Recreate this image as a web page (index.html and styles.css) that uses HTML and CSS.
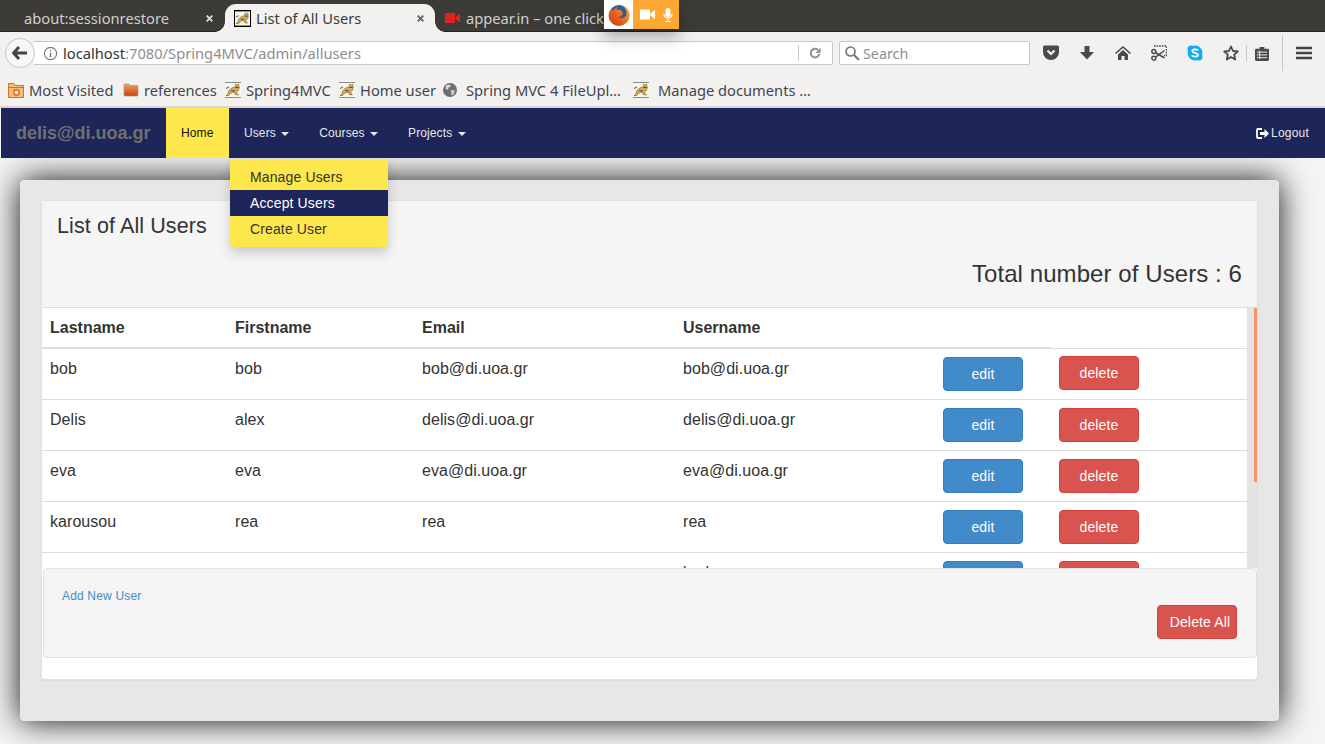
FILE: index.html
```html
<!DOCTYPE html>
<html lang="en">
<head>
<meta charset="utf-8">
<title>List of All Users</title>
<link rel="stylesheet" href="styles.css">
</head>
<body>
<svg class="defs" width="0" height="0" aria-hidden="true">
  <symbol id="tomcat" viewBox="0 0 16 16">
    <rect width="16" height="16" fill="#f6f5f0"/>
    <path d="M0 .5h16M0 15.500h16" stroke="#8a8a86"/>
    <path d="M1 13.500l2-1.500 .5-3 3-3 3.500-1 .8-3 1.400 1.200 1.300-1.200 .8 3.500-1 3-2 1.500 2 3-3-.5-1.500-2.500-3 1-2 2.500z" fill="#d9ae55" stroke="#6f5c2a" stroke-width=".6"/>
    <path d="M1 6.500l3-1.500M10.500 5.500l3 0M6 8.500l4 .5" stroke="#3a3a36" stroke-width=".9"/>
  </symbol>
</svg>

<header class="chrome">
  <div class="tabstrip">
    <div class="tab tab-first"><span class="tab-label">about:sessionrestore</span>
      <svg class="tab-x" width="7" height="7" viewBox="0 0 7 7"><path d="M.7.700l5.600 5.600M6.300.700L.7 6.300" stroke="#dcdbd7" stroke-width="1.900"/></svg>
    </div>
    <div class="tab tab-active">
      <svg class="fav-boxed" width="17" height="17"><use href="#tomcat"/></svg>
      <span class="tab-label">List of All Users</span>
      <svg class="tab-x" width="7" height="7" viewBox="0 0 7 7"><path d="M.7.700l5.600 5.600M6.300.700L.7 6.300" stroke="#666" stroke-width="1.900"/></svg>
    </div>
    <div class="tab tab-third">
      <svg width="15" height="10" viewBox="0 0 15 10"><path d="M0 1q0-1 1-1h8q1 0 1 1v8q0 1-1 1H1q-1 0-1-1zM10.500 4L15 .5v9L10.500 6z" fill="#e0241c"/></svg>
      <span class="tab-label">appear.in – one click</span>
    </div>
  </div>
  <div class="sharing">
    <div class="sharing-fx">
      <svg width="22" height="22" viewBox="0 0 22 22">
        <defs>
          <linearGradient id="fxo" x1="1" y1="0" x2="0" y2="1"><stop offset="0" stop-color="#fbc02a"/><stop offset=".45" stop-color="#ee6f1e"/><stop offset="1" stop-color="#c9341c"/></linearGradient>
        </defs>
        <circle cx="11" cy="11" r="10" fill="#2a5c9e"/>
        <path d="M13 1c5 1 8.500 5 8.500 10a10.500 10.500 0 0 1-21 1C.5 9 2.500 5.500 4 4c0 1.500.5 2.500 1 3.500C6 5 8 3.500 10.500 2.800c-1.500 1.200-2 2.200-1.500 3.200 2-1 5 .2 5.500 2.800.5 3-2 4.800-4.500 4.200 2 2 6.500 1.500 8-1.500 1.500-3.500-.5-8.200-5-10.500z" fill="url(#fxo)"/>
      </svg>
    </div>
    <div class="sharing-media">
      <svg width="15" height="11" viewBox="0 0 15 11"><path d="M0 1.500Q0 .5 1 .5h8q1 0 1 1v8q0 1-1 1H1q-1 0-1-1zM10.500 4.500L15 1v9l-4.500-3.500z" fill="#fff"/></svg>
      <svg width="10" height="14" viewBox="0 0 10 14"><rect x="2.500" y="0" width="5" height="9" rx="2.500" fill="#fff"/><path d="M1 6a4 4 0 0 0 8 0M5 10v3M2 13.500h6" fill="none" stroke="#fff" stroke-width="1.200"/></svg>
    </div>
  </div>

  <div class="toolbar">
    <button class="back" type="button" aria-label="Back">
      <svg width="16" height="14" viewBox="0 0 16 14"><path d="M7 1L1.500 7 7 13M2 7h13" fill="none" stroke="#444" stroke-width="3"/></svg>
    </button>
    <div class="urlbar">
      <svg class="info" width="15" height="15" viewBox="0 0 16 16"><circle cx="8" cy="8" r="6.500" fill="none" stroke="#777" stroke-width="1.200"/><path d="M8 7v5M8 4v1.600" stroke="#777" stroke-width="1.500"/></svg>
      <span class="url"><span class="url-host">localhost</span>:7080/Spring4MVC/admin/allusers</span>
      <span class="url-sep"></span>
      <svg class="reload" width="12" height="12" viewBox="0 0 14 14"><path d="M12 8a5 5 0 1 1-1.500-4.500" fill="none" stroke="#8a9199" stroke-width="2.400"/><path d="M13.500 1v6h-6z" fill="#8a9199"/></svg>
    </div>
    <div class="searchbar">
      <svg width="16" height="16" viewBox="0 0 16 16"><circle cx="6.500" cy="6.500" r="4.500" fill="none" stroke="#777" stroke-width="1.700"/><path d="M10 10l5 5" stroke="#777" stroke-width="2.200"/></svg>
      <span>Search</span>
    </div>
    <div class="tools">
      <svg class="tool" width="16" height="16" viewBox="0 0 16 16"><path d="M0 2q0-1.500 1.500-1.500h13Q16 .5 16 2v5A8 8 0 0 1 0 7z" fill="#4a4a4a"/><path d="M4.500 5.500L8 9l3.500-3.500" fill="none" stroke="#f2f1ef" stroke-width="2.200"/></svg>
      <svg class="tool" width="16" height="16" viewBox="0 0 16 16"><path d="M5.500 1h5v6H15l-7 7.500L1 7h4.500z" fill="#4a4a4a"/></svg>
      <svg class="tool" width="16" height="16" viewBox="0 0 16 16"><path d="M8 1l8 7-1 1-7-6-7 6-1-1z" fill="#4a4a4a"/><path d="M3 9.500L8 5l5 4.500V15H9.500v-4h-3v4H3z" fill="#4a4a4a"/></svg>
      <svg class="tool" width="16" height="16" viewBox="0 0 16 16"><path d="M3 1h12.500v9.500H13" fill="none" stroke="#4a4a4a" stroke-width="1.300" stroke-dasharray="1.600 1"/><circle cx="2.800" cy="6.500" r="2" fill="none" stroke="#4a4a4a" stroke-width="1.400"/><circle cx="2.800" cy="13.200" r="2" fill="none" stroke="#4a4a4a" stroke-width="1.400"/><path d="M4.500 7.500l9 5.500M4.500 12.200l9-6.700" stroke="#4a4a4a" stroke-width="1.500"/></svg>
      <svg class="tool" width="16" height="16" viewBox="0 0 16 16"><circle cx="8" cy="8" r="7.500" fill="#12aef0"/><circle cx="4" cy="4" r="3.500" fill="#12aef0"/><circle cx="12" cy="12" r="3.500" fill="#12aef0"/><path d="M11 5.500C10 4 5 4 5.200 6.200 5.500 8.500 11 7.500 11 10c0 2-5 2-6.200.3" fill="none" stroke="#fff" stroke-width="1.700"/></svg>
      <svg class="tool" width="16" height="16" viewBox="0 0 16 16"><path d="M8 1.500l2 4.500 4.800.5-3.600 3.200 1 4.800L8 12l-4.200 2.500 1-4.800L1.200 6.500 6 6z" fill="none" stroke="#4a4a4a" stroke-width="1.800" stroke-linejoin="round"/></svg>
      <span class="tool-sep"></span>
      <svg class="tool tool-list" width="14" height="15" viewBox="0 0 15 16"><path d="M1.500 3h3.500V1h5v2h3.500Q15 3 15 4.500v10q0 1.500-1.500 1.500h-12Q0 16 0 14.500v-10Q0 3 1.500 3z" fill="#4a4a4a"/><path d="M2 6.500h11M2 9.500h11M2 12.500h11M5 5v9" stroke="#f2f1ef" stroke-width="1"/></svg>
      <span class="tool-sep tool-sep-tall"></span>
      <svg class="tool tool-menu" width="16" height="14" viewBox="0 0 16 14"><path d="M0 2h16M0 7h16M0 12h16" stroke="#444" stroke-width="2.600"/></svg>
    </div>
  </div>

  <div class="bookmarks">
    <div class="bm bm-1">
      <svg width="16" height="16" viewBox="0 0 16 16"><path d="M.5 1.500h5.500l1 2h8.500v12H.5z" fill="#f5bd7c" stroke="#d5701f"/><path d="M.5 5.500h15" stroke="#d5701f"/><circle cx="8.500" cy="10.500" r="2.700" fill="#fbe5c8" stroke="#d5701f" stroke-width="1.400"/></svg>
      <span>Most Visited</span>
    </div>
    <div class="bm bm-2">
      <svg width="16" height="16" viewBox="0 0 16 16"><defs><linearGradient id="fold" x1="0" y1="0" x2="0" y2="1"><stop offset="0" stop-color="#f2a25b"/><stop offset="1" stop-color="#c93f10"/></linearGradient></defs><path d="M1 3q0-1 1-1h4l1 1.500h7q1 0 1 1V13q0 1-1 1H2q-1 0-1-1z" fill="url(#fold)" stroke="#9a9a92" stroke-width=".7"/></svg>
      <span>references</span>
    </div>
    <div class="bm bm-3"><svg width="16" height="16"><use href="#tomcat"/></svg><span>Spring4MVC</span></div>
    <div class="bm bm-4"><svg width="16" height="16"><use href="#tomcat"/></svg><span>Home user</span></div>
    <div class="bm bm-5">
      <svg width="16" height="16" viewBox="0 0 16 16"><circle cx="8" cy="8" r="7" fill="#6e6e6e"/><path d="M4 3l4-.5 1 2-3 1.500.5 2-3-1zM9 8l4 .5-1.500 4-2 1z" fill="#d4d4d2"/></svg>
      <span>Spring MVC 4 FileUpl…</span>
    </div>
    <div class="bm bm-6"><svg width="16" height="16"><use href="#tomcat"/></svg><span>Manage documents …</span></div>
  </div>
</header>

<nav class="navbar">
  <a class="brand">delis@di.uoa.gr</a>
  <a class="nav-link nav-home">Home</a>
  <div class="nav-drop">
    <a class="nav-link">Users <i class="caret"></i></a>
    <ul class="menu">
      <li>Manage Users</li>
      <li class="menu-active">Accept Users</li>
      <li>Create User</li>
    </ul>
  </div>
  <a class="nav-link">Courses <i class="caret"></i></a>
  <a class="nav-link">Projects <i class="caret"></i></a>
  <a class="nav-logout">
    <svg width="13" height="11" viewBox="0 0 13 11"><path d="M6 1H2Q1 1 1 2v7q0 1 1 1h4" fill="none" stroke="#fff" stroke-width="1.800"/><path d="M4 4h4.500V1L13 5.500 8.500 10V7H4z" fill="#fff"/></svg>
    Logout
  </a>
</nav>

<main class="well">
  <section class="panel">
    <div class="panel-heading">
      <h1 class="panel-title">List of All Users</h1>
      <div class="total">Total number of Users : 6</div>
    </div>
    <div class="scroller">
      <table class="users">
        <colgroup><col class="c1"><col class="c2"><col class="c3"><col class="c4"><col class="c5"><col class="c6"></colgroup>
        <thead>
          <tr><th>Lastname</th><th>Firstname</th><th>Email</th><th>Username</th><th></th><th class="th-empty"></th></tr>
        </thead>
        <tbody>
          <tr><td>bob</td><td>bob</td><td>bob@di.uoa.gr</td><td>bob@di.uoa.gr</td><td class="act"><a class="btn btn-edit">edit</a></td><td class="act"><a class="btn btn-del btn-raise">delete</a></td></tr>
          <tr><td>Delis</td><td>alex</td><td>delis@di.uoa.gr</td><td>delis@di.uoa.gr</td><td class="act"><a class="btn btn-edit">edit</a></td><td class="act"><a class="btn btn-del">delete</a></td></tr>
          <tr><td>eva</td><td>eva</td><td>eva@di.uoa.gr</td><td>eva@di.uoa.gr</td><td class="act"><a class="btn btn-edit">edit</a></td><td class="act"><a class="btn btn-del">delete</a></td></tr>
          <tr><td>karousou</td><td>rea</td><td>rea</td><td>rea</td><td class="act"><a class="btn btn-edit">edit</a></td><td class="act"><a class="btn btn-del">delete</a></td></tr>
          <tr><td></td><td></td><td></td><td>kurk</td><td class="act"><a class="btn btn-edit"></a></td><td class="act"><a class="btn btn-del"></a></td></tr>
        </tbody>
      </table>
      <div class="scroll-track"><div class="scroll-thumb"></div></div>
    </div>
    <div class="panel-foot">
      <a class="add-link">Add New User</a>
      <a class="btn btn-del btn-all">Delete All</a>
    </div>
  </section>
</main>
</body>
</html>
```
FILE: styles.css
```css
* { box-sizing: border-box; }
html, body { margin: 0; height: 744px; overflow: hidden; }
body { background: #f4f4f4; font-family: "Liberation Sans", Arial, sans-serif; color: #333; position: relative; }
.defs { position: absolute; }
svg { display: block; flex: none; }

/* browser chrome */
.chrome { position: relative; height: 108px; background: #f2f1ef; border-bottom: 2px solid #d6d5d3; font-family: "Noto Sans", sans-serif; }
.tabstrip { height: 32px; background: linear-gradient(#24231f, #24231f) bottom / 100% 1px no-repeat, #3c3b37; display: flex; align-items: flex-start; padding-top: 4px; }
.tab { display: flex; align-items: center; height: 28px; font-size: 14.7px; color: #d0cfcb; white-space: nowrap; }
.tab-first { width: 225px; padding-left: 24px; }
.tab-first .tab-x { margin-left: auto; margin-right: 12px; }
.tab-active { width: 210px; background: #f2f1ef; color: #3c3b37; border-radius: 11px 11px 0 0; padding-left: 9px; gap: 5px; position: relative; z-index: 1; }
.tab-active::before, .tab-active::after { content: ""; position: absolute; bottom: 0; width: 10px; height: 10px; }
.tab-active::before { left: -10px; background: radial-gradient(circle at 0 0, transparent 9.500px, #f2f1ef 10px); }
.tab-active::after { right: -10px; background: radial-gradient(circle at 100% 0, transparent 9.500px, #f2f1ef 10px); }
.tab-active .tab-x { margin-left: auto; margin-right: 11px; }
.fav-boxed { border: 1px solid #000; }
.tab-third { padding-left: 10px; gap: 6px; }

.sharing { position: absolute; left: 604px; top: 0; height: 29px; display: flex; box-shadow: 0 8px 16px rgba(0, 0, 0, .3); z-index: 2; }
.sharing-fx { width: 29px; background: #fff; display: flex; align-items: center; justify-content: center; }
.sharing-media { width: 46px; background: #ffa733; display: flex; align-items: center; justify-content: center; gap: 8px; }

.toolbar { height: 42px; display: flex; align-items: center; padding-left: 5px; position: relative; }
.back { width: 30px; height: 30px; border-radius: 50%; border: 1px solid #c6c6c4; background: #f7f7f6; padding: 0; display: flex; align-items: center; justify-content: center; position: relative; z-index: 1; }
.urlbar { width: 799px; height: 24px; margin-left: -1px; background: #fff; border: 1px solid #c8c8c6; border-left: 0; border-radius: 0 2px 2px 0; display: flex; align-items: center; padding-left: 9px; font-size: 14.7px; }
.url { color: #8e8e8e; margin-left: 5px; }
.url-host { color: #333; }
.url-sep { width: 1px; height: 16px; background: #c8c8c6; margin-left: auto; }
.reload { margin: 0 11px 0 10px; }
.searchbar { width: 191px; height: 24px; margin-left: 6px; background: #fff; border: 1px solid #c8c8c6; border-radius: 2px; display: flex; align-items: center; padding-left: 4px; gap: 3px; font-size: 14.3px; color: #8e8e8e; }
.tools { display: flex; align-items: center; margin-left: 13px; }
.tool { margin-right: 20px; }
.tool-sep { width: 1px; height: 16px; background: #c9c8c6; margin-left: -13px; margin-right: 8px; }
.tool-list { margin-right: 13px; }
.tool-sep-tall { height: 36px; margin: 0 13px 0 0; }
.tool-menu { margin: 0; }

.bookmarks { height: 32px; display: flex; align-items: center; padding-left: 8px; font-size: 14.7px; color: #44444f; }
.bm { display: flex; align-items: center; gap: 5px; white-space: nowrap; }
.bm-1 { width: 115px; }
.bm-2 { width: 102px; }
.bm-3 { width: 114px; }
.bm-4 { width: 103px; }
.bm-5 { width: 191px; gap: 8px; }
.bm-6 { gap: 9px; }

/* site navbar */
.navbar { height: 50px; margin-left: 1px; background: #1e2558; display: flex; align-items: stretch; font-size: 12px; color: #fff; position: relative; z-index: 3; }
.brand { width: 165px; padding-left: 15px; font-size: 18px; font-weight: 700; line-height: 50px; color: #707070; }
.nav-link { display: block; padding: 0 15px; line-height: 50px; white-space: nowrap; color: #e8e8e8; letter-spacing: .1px; }
.nav-home { width: 63px; background: #fde74c; color: #111; }
.nav-drop { position: relative; }
.caret { display: inline-block; width: 0; height: 0; margin-left: 2px; vertical-align: middle; border-top: 4px solid; border-left: 4px solid transparent; border-right: 4px solid transparent; }
.nav-logout { margin-left: auto; margin-right: 16px; display: flex; align-items: center; gap: 2px; color: #e8e8e8; letter-spacing: .2px; }
.menu { position: absolute; left: 1px; top: 51px; width: 158px; height: 88px; margin: 0; padding: 5px 0; list-style: none; background: #fde74c; border-radius: 0 0 4px 4px; box-shadow: 0 6px 12px rgba(0, 0, 0, .18); font-size: 14px; letter-spacing: .13px; color: #333; }
.menu li { height: 26px; line-height: 26px; padding-left: 20px; }
.menu .menu-active { background: #1e2558; color: #fff; }

/* content */
.well { width: 1259px; height: 541px; margin: 22px 0 0 20px; padding: 20px 21px 0; background: #e8e7e5; border-radius: 4px; box-shadow: 0 0 32px rgba(0, 0, 0, .95); }
.panel { height: 480px; background: #fff; border: 1px solid #e1e1e1; border-radius: 3px; box-shadow: 0 1px 1px rgba(0, 0, 0, .05); }
.panel-heading { height: 107px; background: #f5f5f5; border-bottom: 1px solid #ddd; padding: 14px 15px 0; }
.panel-title { margin: 0; font-size: 21.5px; letter-spacing: .1px; font-weight: 400; line-height: 23px; color: #333; }
.total { margin-top: 22px; text-align: right; font-size: 24px; letter-spacing: .08px; line-height: 27px; }
.scroller { position: relative; height: 260px; overflow: hidden; padding-right: 10px; }
.users { width: 1205px; border-collapse: collapse; table-layout: fixed; font-size: 16px; }
.c1 { width: 185px; } .c2 { width: 187px; } .c3 { width: 261px; } .c4 { width: 260px; } .c5 { width: 116px; } .c6 { width: 196px; }
.users th { height: 40px; padding: 0 8px; text-align: left; font-weight: 700; border-bottom: 2px solid #ddd; }
.users th.th-empty { border-bottom-width: 1px; }
.users td { height: 51px; padding: 8px 8px 0; vertical-align: top; line-height: 24px; letter-spacing: .05px; border-bottom: 1px solid #ddd; }
.btn { display: block; width: 80px; height: 34px; border: 1px solid; border-radius: 4px; text-align: center; font-size: 14px; letter-spacing: .15px; line-height: 32px; color: #fff; }
.btn-edit { background: #428bca; border-color: #357ebd; }
.btn-del { background: #d9534f; border-color: #d43f3a; }
.btn-raise { margin-top: -1px; }
.scroll-track { position: absolute; right: 0; top: 0; bottom: 0; width: 10px; background: #e3e3e3; }
.scroll-thumb { position: absolute; right: 0; top: 0; width: 3px; height: 174px; background: #f5946b; }
.panel-foot { height: 90px; margin-left: 1px; background: #f4f4f4; border: 1px solid #e3e3e3; border-radius: 4px; display: flex; justify-content: space-between; padding: 20px 19px 0 18px; }
.add-link { font-size: 12px; letter-spacing: .17px; line-height: 14px; color: #428bca; }
.btn-all { margin-top: 16px; padding-left: 6px; }
```
